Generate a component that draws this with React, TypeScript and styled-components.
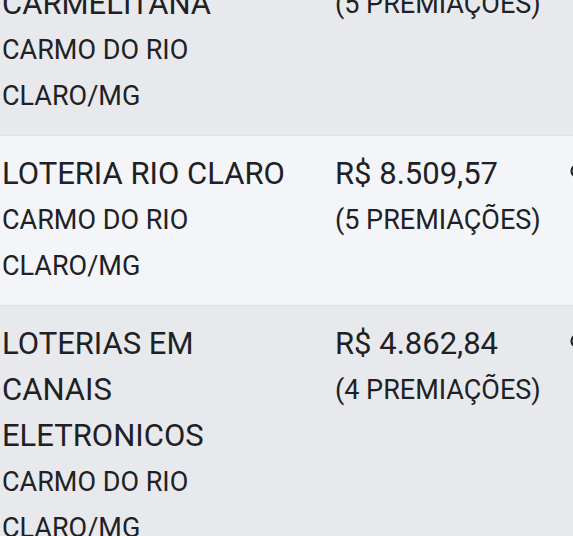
import React from "react";
import styled, { createGlobalStyle } from "styled-components";

const GlobalStyle = createGlobalStyle`
  html, body {
    margin: 0;
    padding: 0;
    background: #e8e9ed;
    overflow: hidden;
  }
  body {
    font-family: Roboto, "Noto Sans", Arial, sans-serif;
    color: #202124;
  }
`;

const Viewport = styled.div`
  width: 573px;
  height: 536px;
  overflow: hidden;
`;

const Table = styled.div`
  display: flex;
  flex-direction: column;
  margin-top: -80px;
  width: 640px;
`;

const Row = styled.div<{ $light?: boolean }>`
  display: grid;
  grid-template-columns: 333px 235px 1fr;
  padding: 15px 0 16px;
  background: ${(p) => (p.$light ? "#f4f5f9" : "#e8e9ed")};
  border-bottom: 1px solid ${(p) => (p.$light ? "#dedfe3" : "#e1e2e6")};
`;

const Cell = styled.div<{ $pr?: number }>`
  padding: 0 ${(p) => p.$pr ?? 2}px 0 2px;
  display: flex;
  flex-direction: column;
  min-width: 0;
`;

const Title = styled.div`
  font-size: 31px;
  line-height: 46px;
  text-transform: uppercase;
`;

const Sub = styled.div`
  font-size: 27px;
  line-height: 46px;
  text-transform: uppercase;
`;

const Extra = styled.div`
  height: 46px;
  display: flex;
  align-items: center;
`;

const Mark = () => (
  <svg width="14" height="14" viewBox="0 0 14 14" style={{ marginTop: -6 }}>
    <circle cx="7" cy="7" r="5.5" fill="none" stroke="#202124" strokeWidth="2.2" />
  </svg>
);

type Item = {
  name: string;
  city: string;
  value: string;
  count: string;
};

const items: Item[] = [
  { name: "LOTERIA CARMELITANA", city: "CARMO DO RIO CLARO/MG", value: "R$ 9.214,33", count: "(5 PREMIAÇÕES)" },
  { name: "LOTERIA RIO CLARO", city: "CARMO DO RIO CLARO/MG", value: "R$ 8.509,57", count: "(5 PREMIAÇÕES)" },
  { name: "LOTERIAS EM CANAIS ELETRONICOS", city: "CARMO DO RIO CLARO/MG", value: "R$ 4.862,84", count: "(4 PREMIAÇÕES)" },
];

export default function App() {
  return (
    <Viewport>
      <GlobalStyle />
      <Table>
        {items.map((it, i) => (
          <Row key={i} $light={i % 2 === 1}>
            <Cell $pr={38}>
              <Title>{it.name}</Title>
              <Sub>{it.city}</Sub>
            </Cell>
            <Cell>
              <Title>{it.value}</Title>
              <Sub>{it.count}</Sub>
            </Cell>
            <Cell>
              <Extra>
                <Mark />
              </Extra>
            </Cell>
          </Row>
        ))}
      </Table>
    </Viewport>
  );
}
